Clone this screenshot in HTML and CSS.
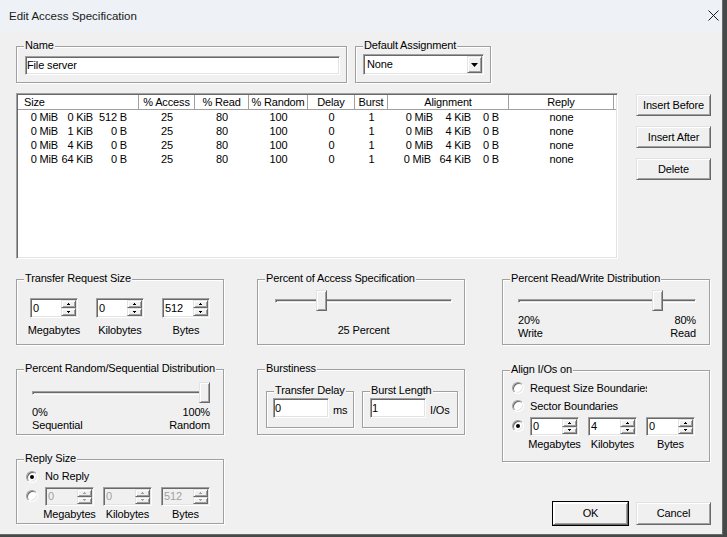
FILE: index.html
```html
<!DOCTYPE html>
<html>
<head>
<meta charset="utf-8">
<title>Edit Access Specification</title>
<link rel="stylesheet" href="styles.css">
</head>
<body>
<div class="window">
  <div class="titlebar">
    <span class="title">Edit Access Specification</span>
    <svg class="close" width="11" height="11" viewBox="0 0 11 11"><path d="M0.5 0.5L10.5 10.5M10.5 0.5L0.5 10.5" stroke="#1a1a1a" stroke-width="1" fill="none"/></svg>
  </div>
  <div class="client">
    <div class="row-top">
      <div class="group g-name">
        <span class="glabel">Name</span>
        <div class="edit sunken name-edit">File server</div>
      </div>
      <div class="group g-default">
        <span class="glabel">Default Assignment</span>
        <div class="combo sunken">
          <span class="combo-text">None</span>
          <div class="dropbtn raised"><svg width="7" height="4" viewBox="0 0 7 4"><path d="M0 0h7l-3.5 4z" fill="#000"/></svg></div>
        </div>
      </div>
    </div>

    <div class="row-list">
      <div class="listview sunken">
        <div class="lv-head">
          <div class="hc w-size left">Size</div>
          <div class="hc w-acc">% Access</div>
          <div class="hc w-read">% Read</div>
          <div class="hc w-rand">% Random</div>
          <div class="hc w-delay">Delay</div>
          <div class="hc w-burst">Burst</div>
          <div class="hc w-align">Alignment</div>
          <div class="hc w-reply">Reply</div>
          <div class="hc w-fill"></div>
        </div>
        <div class="lv-row">
          <div class="c w-size"><span class="s1">0 MiB</span><span class="s2">0 KiB</span><span class="s3">512 B</span></div>
          <div class="c w-acc">25</div><div class="c w-read">80</div><div class="c w-rand">100</div>
          <div class="c w-delay">0</div><div class="c w-burst">1</div>
          <div class="c w-align"><span class="a1">0 MiB</span><span class="a2">4 KiB</span><span class="a3">0 B</span></div>
          <div class="c w-reply">none</div>
        </div>
        <div class="lv-row">
          <div class="c w-size"><span class="s1">0 MiB</span><span class="s2">1 KiB</span><span class="s3">0 B</span></div>
          <div class="c w-acc">25</div><div class="c w-read">80</div><div class="c w-rand">100</div>
          <div class="c w-delay">0</div><div class="c w-burst">1</div>
          <div class="c w-align"><span class="a1">0 MiB</span><span class="a2">4 KiB</span><span class="a3">0 B</span></div>
          <div class="c w-reply">none</div>
        </div>
        <div class="lv-row">
          <div class="c w-size"><span class="s1">0 MiB</span><span class="s2">4 KiB</span><span class="s3">0 B</span></div>
          <div class="c w-acc">25</div><div class="c w-read">80</div><div class="c w-rand">100</div>
          <div class="c w-delay">0</div><div class="c w-burst">1</div>
          <div class="c w-align"><span class="a1">0 MiB</span><span class="a2">4 KiB</span><span class="a3">0 B</span></div>
          <div class="c w-reply">none</div>
        </div>
        <div class="lv-row">
          <div class="c w-size"><span class="s1">0 MiB</span><span class="s2">64 KiB</span><span class="s3">0 B</span></div>
          <div class="c w-acc">25</div><div class="c w-read">80</div><div class="c w-rand">100</div>
          <div class="c w-delay">0</div><div class="c w-burst">1</div>
          <div class="c w-align"><span class="a1 a1w">0 MiB</span><span class="a2 a2w">64 KiB</span><span class="a3">0 B</span></div>
          <div class="c w-reply">none</div>
        </div>
      </div>
      <div class="side-buttons">
        <div class="btn raised">Insert Before</div>
        <div class="btn raised">Insert After</div>
        <div class="btn raised">Delete</div>
      </div>
    </div>

    <div class="row-bottom">
      <div class="col">
        <div class="group g-transfer">
          <span class="glabel">Transfer Request Size</span>
          <div class="spin-row">
            <div class="sp-col">
              <div class="spin sunken"><span class="val">0</span><div class="ud"><div class="udb raised"><svg width="3" height="2" viewBox="0 0 3 2"><path d="M1 0h1v1h-1zM0 1h3v1h-3z"/></svg></div><div class="udb raised"><svg width="3" height="2" viewBox="0 0 3 2"><path d="M0 0h3v1h-3zM1 1h1v1h-1z"/></svg></div></div></div>
              <span class="sp-label">Megabytes</span>
            </div>
            <div class="sp-col">
              <div class="spin sunken"><span class="val">0</span><div class="ud"><div class="udb raised"><svg width="3" height="2" viewBox="0 0 3 2"><path d="M1 0h1v1h-1zM0 1h3v1h-3z"/></svg></div><div class="udb raised"><svg width="3" height="2" viewBox="0 0 3 2"><path d="M0 0h3v1h-3zM1 1h1v1h-1z"/></svg></div></div></div>
              <span class="sp-label">Kilobytes</span>
            </div>
            <div class="sp-col">
              <div class="spin sunken"><span class="val">512</span><div class="ud"><div class="udb raised"><svg width="3" height="2" viewBox="0 0 3 2"><path d="M1 0h1v1h-1zM0 1h3v1h-3z"/></svg></div><div class="udb raised"><svg width="3" height="2" viewBox="0 0 3 2"><path d="M0 0h3v1h-3zM1 1h1v1h-1z"/></svg></div></div></div>
              <span class="sp-label">Bytes</span>
            </div>
          </div>
        </div>

        <div class="group g-random">
          <span class="glabel">Percent Random/Sequential Distribution</span>
          <div class="slider sl-178"><div class="track sunken"></div><div class="thumb raised th-100"></div></div>
          <div class="ends sl-178">
            <div>0%<br>Sequential</div>
            <div class="right">100%<br>Random</div>
          </div>
        </div>

        <div class="group g-reply">
          <span class="glabel">Reply Size</span>
          <div class="rrow r1"><span class="radio on"></span><span class="rtext">No Reply</span></div>
          <div class="rrow3 r2">
            <span class="radio"></span>
            <div class="spin-row sp-gap9">
              <div class="sp-col w49">
                <div class="spin sunken dis h19"><span class="val">0</span><div class="ud"><div class="udb raised"><svg width="3" height="2" viewBox="0 0 3 2"><path d="M1 0h1v1h-1zM0 1h3v1h-3z"/></svg></div><div class="udb raised"><svg width="3" height="2" viewBox="0 0 3 2"><path d="M0 0h3v1h-3zM1 1h1v1h-1z"/></svg></div></div></div>
                <span class="sp-label tight">Megabytes</span>
              </div>
              <div class="sp-col w49">
                <div class="spin sunken dis h19"><span class="val">0</span><div class="ud"><div class="udb raised"><svg width="3" height="2" viewBox="0 0 3 2"><path d="M1 0h1v1h-1zM0 1h3v1h-3z"/></svg></div><div class="udb raised"><svg width="3" height="2" viewBox="0 0 3 2"><path d="M0 0h3v1h-3zM1 1h1v1h-1z"/></svg></div></div></div>
                <span class="sp-label tight">Kilobytes</span>
              </div>
              <div class="sp-col w49">
                <div class="spin sunken dis h19"><span class="val">512</span><div class="ud"><div class="udb raised"><svg width="3" height="2" viewBox="0 0 3 2"><path d="M1 0h1v1h-1zM0 1h3v1h-3z"/></svg></div><div class="udb raised"><svg width="3" height="2" viewBox="0 0 3 2"><path d="M0 0h3v1h-3zM1 1h1v1h-1z"/></svg></div></div></div>
                <span class="sp-label tight">Bytes</span>
              </div>
            </div>
          </div>
        </div>
      </div>

      <div class="col col2">
        <div class="group g-access">
          <span class="glabel">Percent of Access Specification</span>
          <div class="slider sl-177"><div class="track sunken"></div><div class="thumb raised th-25"></div></div>
          <div class="pct sl-177">25 Percent</div>
        </div>
        <div class="group g-burst">
          <span class="glabel">Burstiness</span>
          <div class="group sub sub-delay">
            <span class="glabel">Transfer Delay</span>
            <div class="edit sunken small-edit">0</div>
            <span class="suffix">ms</span>
          </div>
          <div class="group sub sub-len">
            <span class="glabel">Burst Length</span>
            <div class="edit sunken small-edit">1</div>
            <span class="suffix">I/Os</span>
          </div>
        </div>
      </div>

      <div class="col col3">
        <div class="group g-rw">
          <span class="glabel">Percent Read/Write Distribution</span>
          <div class="slider sl-178"><div class="track sunken"></div><div class="thumb raised th-80"></div></div>
          <div class="ends sl-178 rw-ends">
            <div>20%<br>Write</div>
            <div class="right">80%<br>Read</div>
          </div>
        </div>
        <div class="group g-align">
          <span class="glabel">Align I/Os on</span>
          <div class="rrow"><span class="radio"></span><span class="rtext clip">Request Size Boundaries</span></div>
          <div class="rrow"><span class="radio"></span><span class="rtext">Sector Boundaries</span></div>
          <div class="rrow3 r3">
            <span class="radio on"></span>
            <div class="spin-row sp-gap9">
              <div class="sp-col w49">
                <div class="spin sunken h19"><span class="val">0</span><div class="ud"><div class="udb raised"><svg width="3" height="2" viewBox="0 0 3 2"><path d="M1 0h1v1h-1zM0 1h3v1h-3z"/></svg></div><div class="udb raised"><svg width="3" height="2" viewBox="0 0 3 2"><path d="M0 0h3v1h-3zM1 1h1v1h-1z"/></svg></div></div></div>
                <span class="sp-label tight">Megabytes</span>
              </div>
              <div class="sp-col w49">
                <div class="spin sunken h19"><span class="val">4</span><div class="ud"><div class="udb raised"><svg width="3" height="2" viewBox="0 0 3 2"><path d="M1 0h1v1h-1zM0 1h3v1h-3z"/></svg></div><div class="udb raised"><svg width="3" height="2" viewBox="0 0 3 2"><path d="M0 0h3v1h-3zM1 1h1v1h-1z"/></svg></div></div></div>
                <span class="sp-label tight">Kilobytes</span>
              </div>
              <div class="sp-col w49">
                <div class="spin sunken h19"><span class="val">0</span><div class="ud"><div class="udb raised"><svg width="3" height="2" viewBox="0 0 3 2"><path d="M1 0h1v1h-1zM0 1h3v1h-3z"/></svg></div><div class="udb raised"><svg width="3" height="2" viewBox="0 0 3 2"><path d="M0 0h3v1h-3zM1 1h1v1h-1z"/></svg></div></div></div>
                <span class="sp-label tight">Bytes</span>
              </div>
            </div>
          </div>
        </div>
        <div class="dlg-buttons">
          <div class="btn raised default">OK</div>
          <div class="btn raised dlg">Cancel</div>
        </div>
      </div>
    </div>
  </div>
</div>
</body>
</html>
```

FILE: styles.css
```css
* { box-sizing: border-box; }
html, body { margin: 0; padding: 0; }
body {
  width: 727px; height: 537px; overflow: hidden;
  background: #434a47;
  font-family: "Liberation Sans", Arial, sans-serif;
  font-size: 11px; line-height: 13px; color: #000;
  letter-spacing: -0.15px;
}
.window {
  width: 723px; height: 535px; background: #f0f0f0;
  border-right: 1px solid #6a6a6a; border-bottom: 1px solid #6a6a6a;
  overflow: hidden;
}
.titlebar {
  height: 31px; background: #eef2f6;
  display: flex; align-items: center; padding-left: 9px;
}
.title { font-size: 11.5px; line-height: 16px; color: #1a1a1a; letter-spacing: 0; }
.close { margin-left: auto; margin-right: 3px; display: block; }
.client { padding-left: 16px; }

/* 3D edges */
.sunken {
  border: 1px solid; border-color: #a0a0a0 #fff #fff #a0a0a0;
  box-shadow: inset 1px 1px 0 #696969, inset -1px -1px 0 #e3e3e3;
  background: #fff;
}
.raised {
  border: 1px solid; border-color: #e3e3e3 #696969 #696969 #e3e3e3;
  box-shadow: inset 1px 1px 0 #fff, inset -1px -1px 0 #a0a0a0;
  background: #f0f0f0;
}
.group {
  position: relative; flex: none;
  border: 1px solid #a0a0a0;
  box-shadow: inset 1px 1px 0 #fff, 1px 1px 0 #fff;
}
.glabel {
  position: absolute; left: 7px; top: -8px; padding: 0 1px;
  background: #f0f0f0; white-space: nowrap; line-height: 13px;
}

/* top row */
.row-top { display: flex; gap: 8px; margin-top: 15px; }
.g-name { width: 331px; height: 37px; padding: 9px 0 0 8px; }
.edit { display: flex; align-items: center; padding-left: 1px; white-space: nowrap; }
.name-edit { width: 315px; height: 19px; }
.g-default { width: 136px; height: 37px; padding: 7px 0 0 7px; }
.combo { width: 121px; height: 21px; display: flex; padding: 1px; }
.combo-text { flex: 1; padding-left: 2px; display: flex; align-items: center; }
.dropbtn { width: 15px; display: flex; align-items: center; justify-content: center; }
.dropbtn svg { display: block; }

/* list view */
.row-list { display: flex; margin-top: 10px; }
.listview { width: 602px; height: 166px; padding: 1px; flex: none; }
.lv-head { display: flex; height: 15px; }
.hc {
  flex: none; height: 15px; line-height: 14px; text-align: center; white-space: nowrap;
  border-right: 1px solid #a0a0a0; border-bottom: 1px solid #a0a0a0;
  background: #fff;
}
.hc.left { text-align: left; padding-left: 6px; }
.hc.w-fill { border-right: none; }
.lv-row { display: flex; height: 14px; line-height: 14px; }
.c { flex: none; text-align: center; white-space: nowrap; }
.w-size { width: 121px; }
.w-acc { width: 56px; }
.w-read { width: 54px; }
.w-rand { width: 59px; }
.w-delay { width: 47px; }
.w-burst { width: 33px; }
.w-align { width: 121px; }
.w-reply { width: 105px; }
.w-fill { width: 2px; }
.c.w-size, .c.w-align { display: flex; }
.c span { display: block; text-align: right; }
.s1 { width: 40px; }
.s2 { width: 35px; }
.s3 { width: 34px; }
.a1 { width: 45px; }
.a2 { width: 38px; }
.a3 { width: 28px; }
.a1w { width: 43px; }
.a2w { width: 40px; }

.side-buttons { margin-left: 18px; padding-top: 1px; display: flex; flex-direction: column; gap: 10px; }
.btn { width: 75px; height: 22px; display: flex; align-items: center; justify-content: center; white-space: nowrap; flex: none; }

/* bottom area */
.row-bottom { display: flex; margin-top: 20px; }
.col { width: 208px; flex: none; display: flex; flex-direction: column; }
.col2 { margin-left: 33px; }
.col3 { margin-left: 37px; }

.g-transfer { height: 66px; padding: 18px 0 0 13px; }
.spin-row { display: flex; gap: 18px; }
.sp-gap9 { gap: 9px; }
.sp-col { width: 48px; flex: none; display: flex; flex-direction: column; align-items: center; }
.sp-col.w49 { width: 49px; }
.sp-label { margin-top: 6px; white-space: nowrap; }
.sp-label.tight { margin-top: 2px; }
.spin { width: 100%; height: 20px; display: flex; padding: 1px; }
.spin.h19 { height: 19px; }
.spin .val { flex: 1; padding-left: 1px; display: flex; align-items: center; }
.ud { width: 15px; display: flex; flex-direction: column; }
.udb { flex: 1; display: flex; align-items: center; justify-content: center; }
.udb svg { display: block; fill: #000; }
.spin.dis { background: #f0f0f0; }
.spin.dis .val { color: #a0a0a0; }
.spin.dis .udb svg { fill: #a0a0a0; }

.slider { position: relative; height: 21px; }
.sl-177 { width: 177px; }
.sl-178 { width: 178px; }
.track { position: absolute; left: 0; right: 0; top: 9px; height: 4px; }
.thumb { position: absolute; top: 0; width: 11px; height: 21px; }
.th-25 { left: 41px; }
.th-80 { left: 134px; }
.th-100 { left: 167px; }

.g-access { height: 66px; padding: 10px 0 0 17px; }
.pct { text-align: center; margin-top: 13px; }

.g-rw { height: 66px; padding: 10px 0 0 15px; }
.ends { display: flex; justify-content: space-between; margin-top: 3px; }
.ends .right { text-align: right; }

.g-random { margin-top: 24px; height: 66px; padding: 12px 0 0 15px; }

.g-burst { margin-top: 24px; height: 66px; padding: 21px 0 0 8px; display: flex; gap: 8px; align-items: flex-start; }
.sub { height: 37px; display: flex; align-items: flex-start; }
.sub-delay { width: 88px; padding: 6px 0 0 6px; }
.sub-len { width: 96px; padding: 6px 0 0 7px; }
.small-edit { width: 56px; height: 20px; flex: none; }
.suffix { margin-left: 4px; margin-top: 6px; white-space: nowrap; }

.g-reply { margin-top: 24px; height: 65px; padding: 10px 0 0 9px; }
.g-align { margin-top: 25px; height: 92px; padding: 8px 0 0 9px; }

.radio {
  width: 12px; height: 12px; flex: none; border-radius: 50%; position: relative;
  border: 1px solid; border-color: #a0a0a0 #fff #fff #a0a0a0;
  box-shadow: inset 1px 1px 0 #696969, inset -1px -1px 0 #e3e3e3;
  background: #fff;
}
.radio.on::after {
  content: ""; position: absolute; left: 3px; top: 3px;
  width: 4px; height: 4px; border-radius: 50%; background: #000;
}
.rrow { display: flex; align-items: center; height: 18px; }
.rtext { margin-left: 6px; white-space: nowrap; }
.rtext.clip { width: 117px; overflow: hidden; }
.r1 { height: 13px; }
.r1 .rtext { margin-left: 7px; }
.rrow3 { display: flex; align-items: flex-start; margin-top: 2px; }
.rrow3 .radio { margin-top: 3px; }
.r2 { margin-top: 4px; }
.r2 .spin-row { margin-left: 7px; }
.r3 .spin-row { margin-left: 6px; }

.dlg-buttons { margin-top: 40px; margin-right: -1px; display: flex; justify-content: flex-end; gap: 8px; }
.dlg-buttons .btn { height: 23px; }
.btn.default { outline: 1px solid #000; outline-offset: 0; border-color: #fff #696969 #696969 #fff; }
```
